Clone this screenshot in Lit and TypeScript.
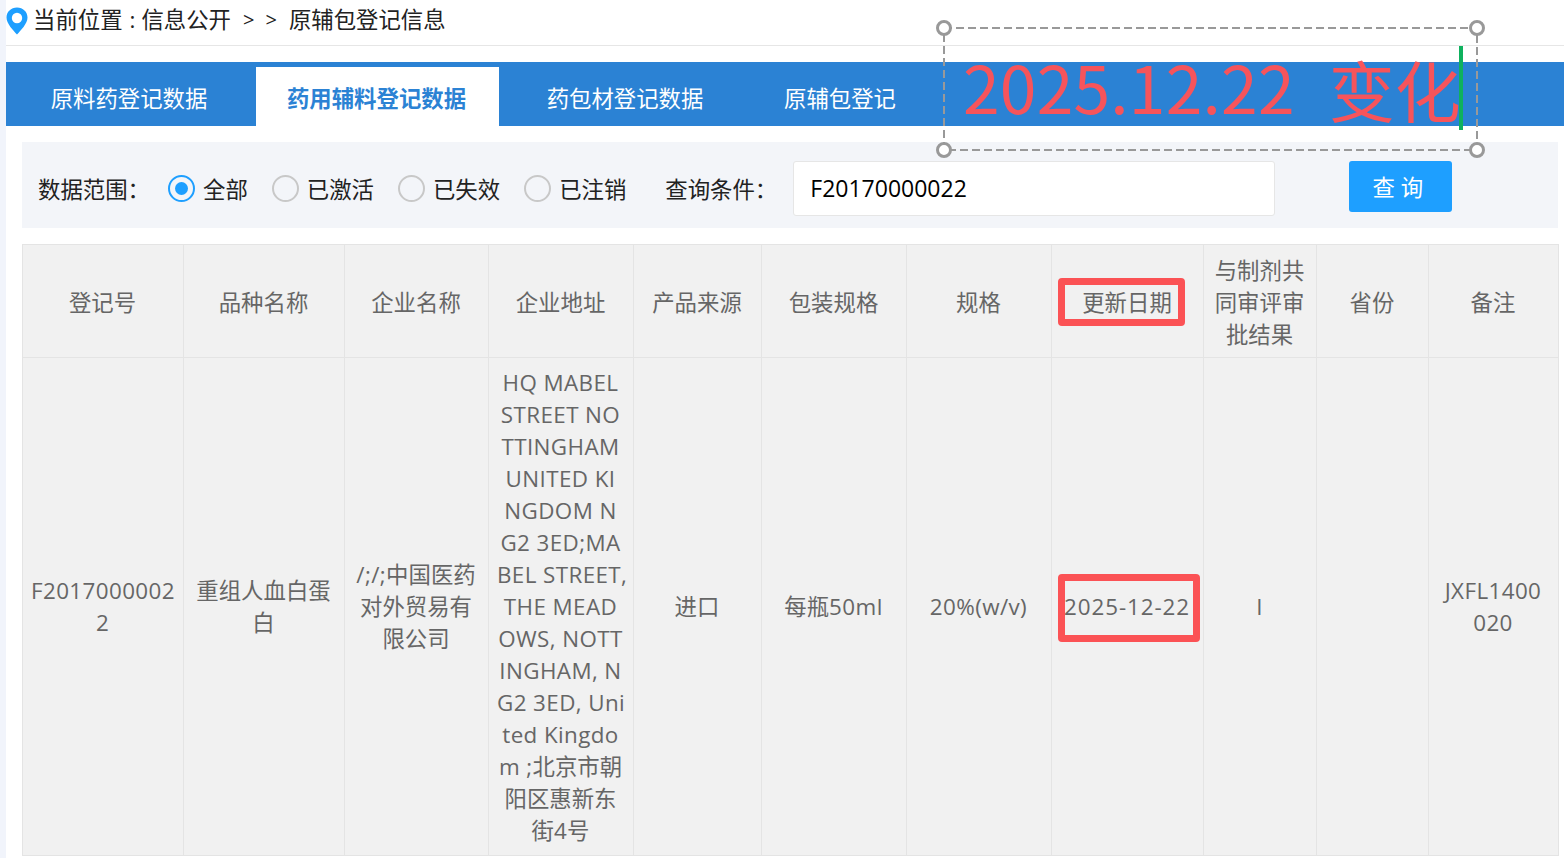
import { LitElement, html, css } from "lit";
import { customElement } from "lit/decorators.js";

const COLS = [161, 161, 144, 145, 128, 145, 145, 152, 113, 112, 130];
const HEAD = ["登记号", "品种名称", "企业名称", "企业地址", "产品来源", "包装规格", "规格", "更新日期", "与制剂共同审评审批结果", "省份", "备注"];
const ROW = [
  "F2017000002\n2",
  "重组人血白蛋白",
  "/;/;中国医药\n对外贸易有\n限公司",
  "HQ MABEL\nSTREET NO\nTTINGHAM\nUNITED KI\nNGDOM N\nG2 3ED;MA\nBEL STREET,\nTHE MEAD\nOWS, NOTT\nINGHAM, N\nG2 3ED, Uni\nted Kingdo\nm ;北京市朝\n阳区惠新东\n街4号",
  "进口",
  "每瓶50ml",
  "20%(w/v)",
  "2025-12-22",
  "I",
  "",
  "JXFL1400\n020",
];

const runs = (s: string) =>
  s.split(/([\x00-\x7f]+)/).map((part, i) => (i % 2 ? html`<span class="lat">${part}</span>` : part));
const lines = (s: string) => s.split("\n").map((l, i) => (i ? html`<br />${runs(l)}` : runs(l)));
const cellClass = (c: string, i: number) => [c.includes("\n") ? "fixed" : "", i === 7 ? "wide" : ""].join(" ");

@customElement("app-root")
export class AppRoot extends LitElement {
  static styles = css`
    :host {
      display: block;
      width: 1564px;
      height: 858px;
      overflow: hidden;
      position: relative;
      background: #fff;
      font-family: "Open Sans", "Noto Sans CJK SC", sans-serif;
    }
    .page {
      display: flex;
      flex-direction: column;
      border-left: 6px solid #f1f4fb;
      height: 858px;
      box-sizing: border-box;
    }
    .crumb {
      box-sizing: border-box;
      border-bottom: 1px solid #e6e6e6;
      display: flex;
      align-items: flex-start;
      flex: none;
      height: 46px;
      font-size: 22.4px;
      line-height: 40px;
      color: #222;
    }
    .pin { width: 22px; height: 28px; margin: 7px 5px 0 0; flex: none; }
    .colon { margin: 0 6px 0 7px; }
    .crumb .sep { margin: 0 11px 0 12px; font-size: 20px; }
    .crumb .sep + .sep { margin-left: 0; margin-right: 12px; }
    .tabs {
      margin-top: 16px;
      height: 64px;
      background: #2b82d4;
      display: flex;
      align-items: flex-end;
      flex: none;
    }
    .tab {
      height: 59px;
      display: flex;
      align-items: center;
      justify-content: center;
      color: #fff;
      font-size: 22.4px;
      line-height: 64px;
      padding-top: 4px;
      box-sizing: border-box;
    }
    .tab.first { width: 250px; padding-right: 4px; }
    .tab.active { width: 243px; background: #fff; color: #2b82d4; font-weight: 700; padding-right: 2px; }
    .tab.third { width: 252px; }
    .tab.fourth { width: 178px; }
    .content { padding: 16px 6px 0 16px; flex: 1; min-height: 0; }
    .filter {
      height: 86px;
      background: #f3f5f9;
      display: flex;
      align-items: center;
      font-size: 22.4px;
      color: #222;
      padding: 6px 0 0 16px;
      box-sizing: border-box;
    }
    .label { width: 130px; flex: none; }
    .radio { display: flex; align-items: center; margin-right: 24px; }
    .dot {
      width: 27px;
      height: 27px;
      border-radius: 50%;
      border: 2px solid #c8c8c8;
      box-sizing: border-box;
      margin-right: 8px;
      display: flex;
      align-items: center;
      justify-content: center;
      flex: none;
    }
    .radio.on .dot { border-color: #1e9fff; }
    .radio.on .dot::after {
      content: "";
      width: 13px;
      height: 13px;
      border-radius: 50%;
      background: #1e9fff;
    }
    .cond { margin-left: 15px; width: 128px; flex: none; }
    .input {
      width: 482px;
      height: 55px;
      box-sizing: border-box;
      background: #fff;
      border: 1px solid #e6e6e6;
      border-radius: 3px;
      padding-left: 16px;
      display: flex;
      align-items: center;
      color: #000;
      font-size: 23px;
    }
    .btn {
      margin-left: 74px;
      width: 103px;
      height: 51px;
      background: #1e9fff;
      border-radius: 3px;
      color: #fff;
      display: flex;
      align-items: center;
      justify-content: center;
      letter-spacing: 6px;
      margin-top: -4px;
    }
    table {
      margin-top: 16px;
      width: 1536px;
      table-layout: fixed;
      border-collapse: collapse;
      background: #f1f1f1;
      color: #666;
      font-size: 22.4px;
      line-height: 32px;
      text-align: center;
    }
    th, td {
      border: 1px solid #e4e4e4;
      padding: 10px 9px 6px 8px;
      font-weight: 400;
      word-break: break-all;
      box-sizing: border-box;
    }
    td { height: 497px; padding-top: 9px; padding-bottom: 8px; }
    td.fixed { white-space: nowrap; }
    .lat { letter-spacing: 0.4px; }
    td.wide .lat { letter-spacing: 0.9px; }
    .mark-h, .mark-d {
      position: absolute;
      border: 7px solid #fb5255;
      border-radius: 4px;
      box-sizing: border-box;
      pointer-events: none;
    }
    .mark-h { left: 1058px; top: 278px; width: 127px; height: 48px; }
    .mark-d { left: 1058px; top: 574px; width: 142px; height: 68px; }
    .box {
      position: absolute;
      left: 935px;
      top: 19px;
      width: 551px;
      height: 140px;
    }
    .frame { position: absolute; left: 0; top: 0; width: 551px; height: 140px; }
    .big {
      position: absolute;
      left: 28px;
      top: 21px;
      font-size: 66px;
      line-height: 90px;
      color: #f6545b;
      white-space: pre;
      font-family: "Noto Sans CJK SC", sans-serif;
      font-weight: 400;
      letter-spacing: 0.2px;
    }
    .big span { position: relative; top: 3px; margin-left: 4px; letter-spacing: 0; }
    .caret {
      position: absolute;
      left: 524px;
      top: 27px;
      width: 4px;
      height: 84px;
      background: #0fb15e;
    }
  `;

  render() {
    return html`
      <div class="page">
        <div class="crumb">
          <svg class="pin" viewBox="0 0 22 28">
            <path d="M11 0.5C5 0.5 0.5 4.9 0.5 10.4c0 6.3 7 13 10.5 17.1 3.5-4.1 10.5-10.8 10.5-17.1C21.5 4.9 17 0.5 11 0.5z" fill="#1e9fff"/>
            <circle cx="11" cy="11" r="5.2" fill="#fff"/>
          </svg>
          <span>当前位置<span class="colon">:</span>信息公开</span><span class="sep">&gt;</span><span class="sep">&gt;</span><span>原辅包登记信息</span>
        </div>
        <div class="tabs">
          <div class="tab first">原料药登记数据</div>
          <div class="tab active">药用辅料登记数据</div>
          <div class="tab third">药包材登记数据</div>
          <div class="tab fourth">原辅包登记</div>
        </div>
        <div class="content">
          <div class="filter">
            <div class="label">数据范围：</div>
            <div class="radio on"><span class="dot"></span>全部</div>
            <div class="radio"><span class="dot"></span>已激活</div>
            <div class="radio"><span class="dot"></span>已失效</div>
            <div class="radio"><span class="dot"></span>已注销</div>
            <div class="cond">查询条件：</div>
            <div class="input">F20170000022</div>
            <div class="btn">查询</div>
          </div>
          <table>
            <colgroup>${COLS.map((w) => html`<col style="width:${w}px" />`)}</colgroup>
            <tr>${HEAD.map((h) => html`<th>${h}</th>`)}</tr>
            <tr>${ROW.map((c, i) => html`<td class=${cellClass(c, i)}>${lines(c)}</td>`)}</tr>
          </table>
        </div>
      </div>
      <div class="mark-h"></div>
      <div class="mark-d"></div>
      <div class="box">
        <div class="big">2025.12.22  <span>变化</span></div>
        <div class="caret"></div>
        <svg class="frame" viewBox="0 0 551 140">
          <rect x="9" y="9" width="533" height="122" fill="none" stroke="#999" stroke-width="2" stroke-dasharray="8 4"/>
          <g fill="#fff" stroke="#999" stroke-width="3">
            <circle cx="9" cy="9" r="6.5"/>
            <circle cx="542" cy="9" r="6.5"/>
            <circle cx="9" cy="131" r="6.5"/>
            <circle cx="542" cy="131" r="6.5"/>
          </g>
        </svg>
      </div>
    `;
  }
}
